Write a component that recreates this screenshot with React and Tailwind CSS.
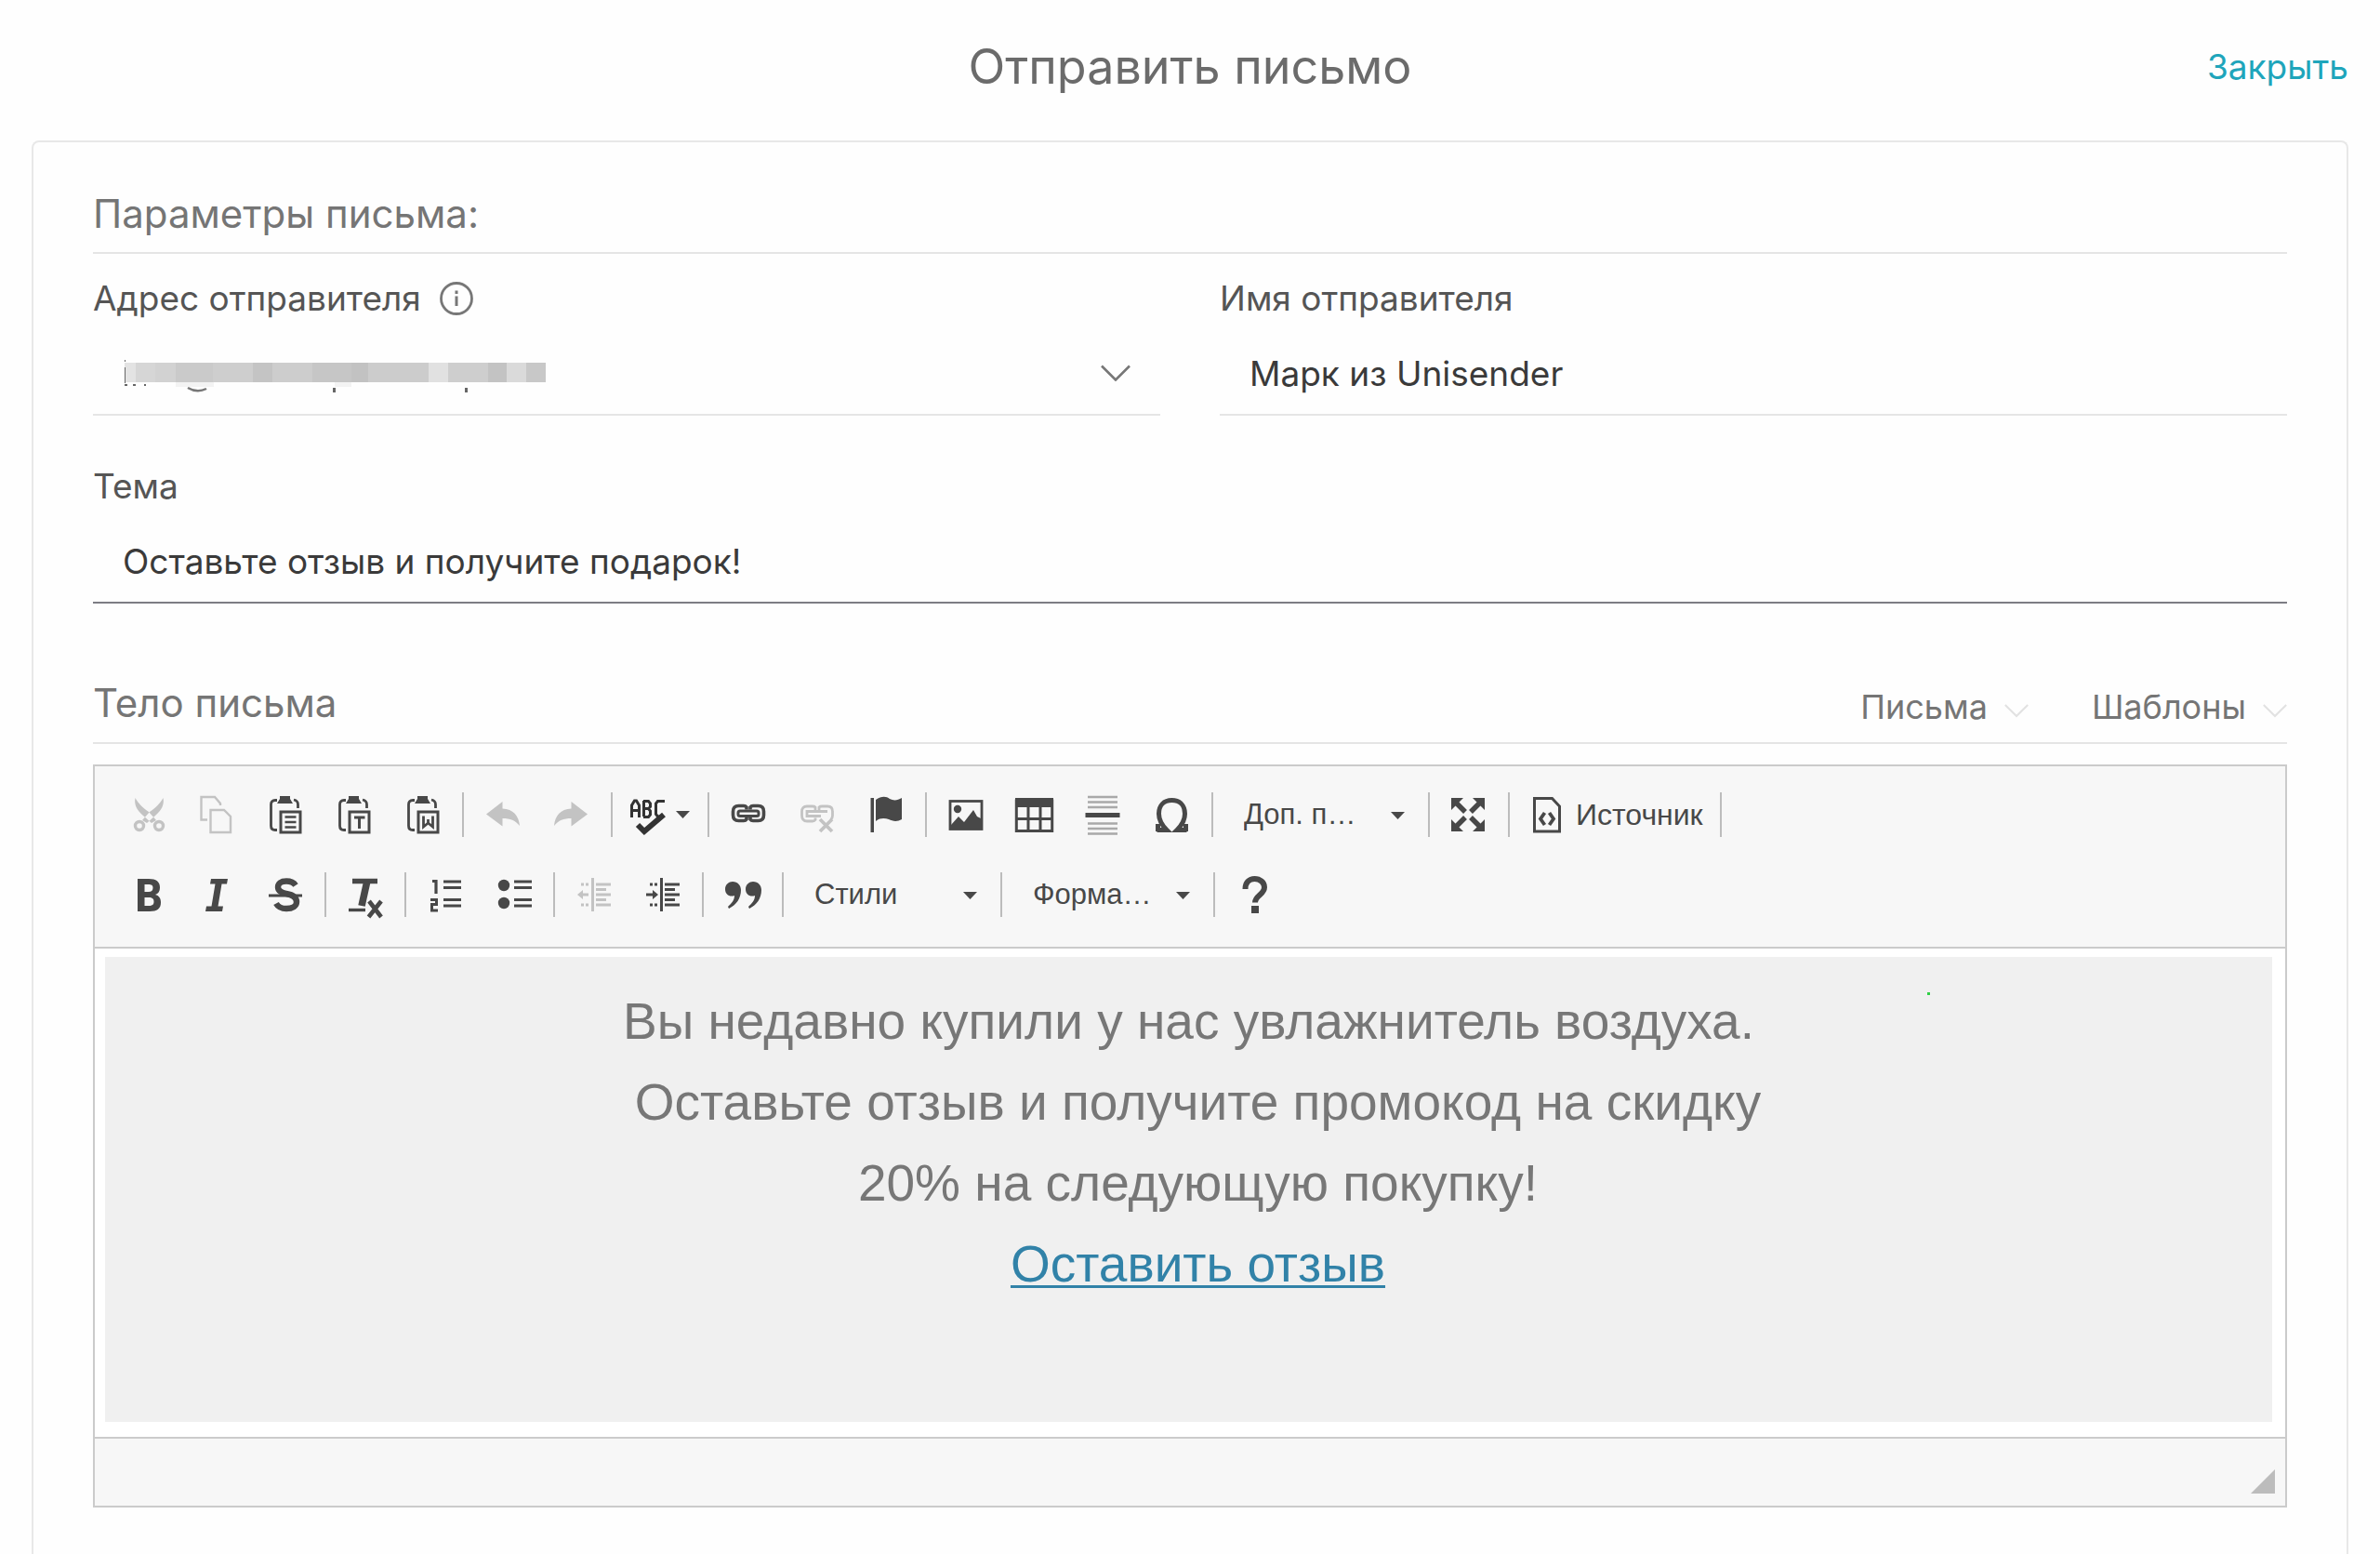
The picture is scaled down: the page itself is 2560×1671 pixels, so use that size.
import { useState } from "react";

function Chevron({ className }) {
  return (
    <svg aria-hidden className={`shrink-0 ${className}`} viewBox="0 0 32 18" fill="none">
      <path d="M1 1.5l15 15 15-15" stroke="currentColor" strokeWidth="2.6" />
    </svg>
  );
}

function Caret({ className = "" }) {
  return (
    <svg aria-hidden className={`h-2 w-[15px] shrink-0 ${className}`} viewBox="0 0 15 8">
      <path d="M0 0h15L7.5 8z" fill="#484848" />
    </svg>
  );
}

// Toolbar glyphs, each on a 36x40 grid
const ICONS = {
  cut: (
    <g>
      <path
        d="M4.500 2C3 9 6 15 13 21l9 8 5-3-8-9C12 12 8 8 4.500 2zM34.500 2c1.500 7-1.500 13-8.500 19l-9 8-5-3 8-9c7-5 11-9 14.500-15z"
        fill="currentColor"
      />
      <circle cx="9" cy="32" r="4.500" fill="none" stroke="currentColor" strokeWidth="3.400" />
      <circle cx="30" cy="32" r="4.500" fill="none" stroke="currentColor" strokeWidth="3.400" />
    </g>
  ),
  copy: (
    <g fill="none" stroke="currentColor" strokeWidth="2.4">
      <path d="M8 25.500H1.500V1H16l6 7v2" />
      <path d="M11.500 15H26l7 7v17H11.500z" />
    </g>
  ),
  undo: (
    <path
      d="M0 19.500L17.500 6v7.500C29 14 35 21 36 32c-5-6-10-8-18.500-8v8.500z"
      fill="currentColor"
    />
  ),
  redo: (
    <path
      d="M35 19.500L17.500 6v7.500C6 14 0 21-1 32c5-6 10-8 18.500-8v8.500z"
      fill="currentColor"
    />
  ),
  link: (
    <g fill="none" stroke="currentColor">
      <path
        d="M16 14.500V12q-1-1.500-3-1.500H7.500q-6 0-6 6v4q0 6 6 6H13q2 0 3-1.500v-2.500M20 14.500V12q1-1.500 3-1.500h5.500q6 0 6 6v4q0 6-6 6H23q-2 0-3-1.500v-2.500"
        strokeWidth="3.600"
      />
      <rect x="7" y="16" width="22" height="5.500" rx="2" strokeWidth="3" />
    </g>
  ),
  unlink: (
    <g fill="none" stroke="currentColor" strokeWidth="2.800">
      <path d="M16 15V12q-1-1-3-1H7q-5.500 0-5.500 5.500v4Q1.500 27 7 27h6q2 0 3-1.500v-2" />
      <path d="M20 15V12q1-1 3-1h6q5.500 0 5.500 5.500V21q0 3-2 4.500" />
      <path d="M22 21.500H7v-5h22" />
      <path d="M21 25l13 13M34 25L21 38" strokeWidth="3.800" />
    </g>
  ),
  flag: (
    <g fill="currentColor">
      <path d="M1.500 2H5v37H1.500z" />
      <path d="M7 4c6-4 11-4 15-1 4 2 8 2 13-1v23c-5 3-10 2-14 0-4-1-9-2-14 2z" />
    </g>
  ),
  image: (
    <g>
      <rect x="1" y="5.500" width="34" height="30" fill="none" stroke="currentColor" strokeWidth="2.800" />
      <circle cx="9" cy="14" r="4.200" fill="currentColor" />
      <path d="M2 36v-5l8-9 6 6 10-13 4 7 4 2v12z" fill="currentColor" />
    </g>
  ),
  table: (
    <g>
      <path d="M-3 2h41v10H-3z" fill="currentColor" />
      <path
        d="M-1.700 3.500v34h38.400v-34M11 11v27M24 11v27M-2 24.500h39"
        fill="none"
        stroke="currentColor"
        strokeWidth="3"
      />
    </g>
  ),
  rule: (
    <g stroke="currentColor">
      <path d="M1 1h32M1 6.500h32M1 12h32M1 29.500h32M1 35h32M1 40.500h32" stroke="#a9a9a9" strokeWidth="2.600" />
      <path d="M-1.500 20.500h37" strokeWidth="5" />
    </g>
  ),
  omega: (
    <path
      d="M1.500 36.500H12C7 31.500 3.500 26 3.500 19 3.500 10 9 4.500 17.500 4.500S31.500 10 31.500 19c0 7-3.500 12.500-8.500 17.500h10.500M2.500 30v8M32.500 30v8"
      fill="none"
      stroke="currentColor"
      strokeWidth="5"
    />
  ),
  maximize: (
    <g fill="currentColor" stroke="currentColor">
      <path d="M-1 2h13L-1 15zM35 2v13L22 2zM-1 38V25l13 13zM35 38H22l13-13z" stroke="none" />
      <path d="M4 7l10 10M30 7L20 17M4 33l10-10M30 33L20 23" strokeWidth="5.500" />
    </g>
  ),
  numbered: (
    <g fill="none" stroke="currentColor">
      <path d="M4 5.500h4V19" strokeWidth="3.200" />
      <path d="M2 25.500h6.500v5H3.500V37H10" strokeWidth="3" />
      <path d="M16 6h19M16 12.500h19M16 25.500h19M16 32h19" strokeWidth="3.200" />
    </g>
  ),
  bulleted: (
    <g fill="none" stroke="currentColor">
      <circle cx="7" cy="10" r="6.200" fill="currentColor" stroke="none" />
      <circle cx="7" cy="29" r="6.200" fill="currentColor" stroke="none" />
      <path d="M18 6h19M18 12.500h19M18 25.500h19M18 32h19" strokeWidth="3.200" />
    </g>
  ),
  outdent: (
    <g fill="none" stroke="currentColor">
      <path d="M16.500 2v36" strokeWidth="3" />
      <path d="M20 9h16M20 14.500h11M20 20h16M20 25.500h11M20 31h16" strokeWidth="2.800" />
      <path d="M4 9h3M9 9h3M4 31h3M9 31h3M3 20h9" strokeWidth="2.800" />
      <path d="M0 20l6-5v10z" fill="currentColor" stroke="none" />
    </g>
  ),
  indent: (
    <g fill="none" stroke="currentColor">
      <path d="M16.500 2v36" strokeWidth="3" />
      <path d="M20 9h16M20 14.500h11M20 20h16M20 25.500h11M20 31h16" strokeWidth="2.800" />
      <path d="M4 9h3M9 9h3M4 31h3M9 31h3M0 20h9" strokeWidth="2.800" />
      <path d="M13 20l-6-5v10z" fill="currentColor" stroke="none" />
    </g>
  ),
  quote: (
    <g fill="currentColor">
      <path d="M7 6c5.500 0 9 4 9 9 0 9-5 16-13 20l-1-2c4-4 7-7 7-12-5 2-10-1-10-7 0-5 4-8 8-8z" />
      <path d="M29 6c5.500 0 9 4 9 9 0 9-5 16-13 20l-1-2c4-4 7-7 7-12-5 2-10-1-10-7 0-5 4-8 8-8z" />
    </g>
  ),
  bold: (
    <path
      d="M7 3h12c8 0 12 3 12 9.500 0 4-2 6.500-5 7.500 4 1 6 4 6 8.500 0 6.500-4 9.500-12 9.500H7zM14.500 9v8h4c3.500 0 5-1.500 5-4.300S22 9 18.500 9zm0 14v9h4.500c4 0 5.500-1.500 5.500-4.500S23 23 19 23z"
      fill="currentColor"
    />
  ),
  italic: (
    <path d="M12 3h18l-1 5.500h-5.500l-4 24H25L24 38H6l1-5.500h5.500l4-24H11z" fill="currentColor" />
  ),
  strike: (
    <g fill="none" stroke="currentColor">
      <path d="M29 10c-2-3-5-4.500-10-4.500-6 0-9 2.500-9 6.500 0 5 5 6 9 7 6 1 11 3 11 9 0 4-4 7-11 7-5 0-9-2-11-5.500" strokeWidth="6.400" />
      <path d="M0 21h36" strokeWidth="3.200" />
    </g>
  ),
  removeFormat: (
    <g fill="none" stroke="currentColor">
      <path d="M4 5.500h27" strokeWidth="5.500" />
      <path d="M20 5l-6 27" strokeWidth="7.600" />
      <path d="M0 36.500h18" strokeWidth="3.400" />
      <path d="M22 27l13 17M35 27L21.500 44" strokeWidth="4.600" />
    </g>
  ),
  help: (
    <g fill="none" stroke="currentColor">
      <path d="M8.500 14c0-7 4-11 10-11S29 7 29 12c0 8-10 9-10 16.500" strokeWidth="6" />
      <path d="M15 32h8v8h-8z" fill="currentColor" stroke="none" />
    </g>
  ),
};

function Clipboard({ children }) {
  return (
    <g>
      <path
        d="M9 4.500H7Q2.500 4.500 2.500 9v23q0 4.500 4.500 4.500h2M27 4q4.500 1 4.500 5v4"
        fill="none"
        stroke="currentColor"
        strokeWidth="2.800"
      />
      <path d="M12 0h11v3l3 5H9l3-5z" fill="currentColor" />
      <rect x="13" y="17" width="21" height="22" fill="none" stroke="currentColor" strokeWidth="3" />
      {children}
    </g>
  );
}

ICONS.paste = (
  <Clipboard>
    <path d="M17.500 22.500h12M17.500 28h12M17.500 33.500h12" stroke="currentColor" strokeWidth="2.600" />
  </Clipboard>
);
ICONS.pasteText = (
  <Clipboard>
    <path d="M18 23h11.500M23.500 23v12" stroke="currentColor" strokeWidth="3" />
  </Clipboard>
);
ICONS.pasteWord = (
  <Clipboard>
    <path d="M18.500 21.500V33l5-4 5 4V21.500M23.500 25v4" fill="none" stroke="currentColor" strokeWidth="2.800" />
  </Clipboard>
);

function Tool({ icon, label, disabled }) {
  return (
    <button
      type="button"
      aria-label={label}
      disabled={disabled}
      className="flex h-12 w-[74px] items-center justify-center text-[#484848] disabled:text-[#c3c3c3]"
    >
      <svg aria-hidden className="h-10 w-9 overflow-visible" viewBox="0 0 36 40">
        {ICONS[icon]}
      </svg>
    </button>
  );
}

function Separator() {
  return <span aria-hidden className="mx-[5px] h-12 w-[2px] bg-[#bcbcbc]" />;
}

function Combo({ label, title, className }) {
  return (
    <div className={`relative h-12 ${className}`}>
      <select
        aria-label={title}
        className="h-12 w-full appearance-none bg-transparent pr-12 pl-7 text-[31px] leading-[48px] text-[#484848]"
      >
        <option>{label}</option>
      </select>
      <Caret className="pointer-events-none absolute top-[21px] right-5" />
    </div>
  );
}

function SpellCheck() {
  return (
    <button
      type="button"
      aria-label="Проверка орфографии"
      className="flex h-12 w-[92px] items-center gap-3 pl-[13px] text-[#333]"
    >
      <svg aria-hidden className="h-10 w-[38px] overflow-visible" viewBox="0 0 38 40" fill="none" stroke="currentColor">
        <path
          d="M2.500 23V10l3-5h2l3 5v13M2.500 15.500h8M15.500 5v17M15 5.500h5.500l2 2.500v3.500l-2 2h-5M20.500 13.500l2 2.500v4l-2 2.500H15M38 5.500h-7.500l-2 2.500v11.500l2 2.500H33"
          strokeWidth="3"
        />
        <path d="M9 31l7 7 21-18" strokeWidth="6" />
      </svg>
      <Caret />
    </button>
  );
}

const MOSAIC = [
  [0, 12, "#e3e3e3"],
  [12, 21, "#d6d6d6"],
  [33, 22, "#d2d2d2"],
  [55, 40, "#cacaca"],
  [95, 43, "#cecece"],
  [138, 21, "#c4c4c4"],
  [159, 43, "#cdcdcd"],
  [202, 42, "#c6c6c6"],
  [244, 18, "#c2c2c2"],
  [262, 65, "#cccccc"],
  [327, 21, "#e1e1e1"],
  [348, 43, "#cecece"],
  [391, 20, "#c3c3c3"],
  [411, 21, "#dadada"],
  [432, 21, "#c8c8c8"],
];

function MaskedAddress() {
  return (
    <svg
      aria-hidden
      className="pointer-events-none absolute top-11 left-[34px] h-9 w-[453px]"
      viewBox="0 0 453 36"
    >
      {MOSAIC.map(([x, width, fill]) => (
        <rect key={x} x={x} y="3" width={width} height="21" fill={fill} />
      ))}
      <path d="M55 24h41v5H55zM226 24h18v5h-18z" fill="#f3f3f3" />
      <path d="M0 0h1v2H0zM0 8h1v17H0zM0 26h3v2H0zM9 26h3v2H9zM21 26h2v2h-2z" fill="#666" />
      <path d="M68 30q10 6 20 1" fill="none" stroke="#777" strokeWidth="2.500" />
      <path d="M224 30h3v5h-3zM366 30h3v5h-3z" fill="#666" />
    </svg>
  );
}

const LABEL = "text-[37px] leading-[44px] text-[#555]";
const FIELD =
  "mt-[14px] h-[90px] w-full appearance-none border-b-2 border-[#e5e5e5] bg-transparent px-8 text-[37px] leading-[44px] text-[#3a3a3a] outline-none";

function MenuButton({ children }) {
  return (
    <button type="button" aria-haspopup="menu" className="flex items-center gap-[18px] text-[36px] leading-[44px]">
      {children}
      <Chevron className="mt-2 h-4 w-[26px] text-[#e2e2e2]" />
    </button>
  );
}

function Toolbar() {
  return (
    <div
      role="toolbar"
      aria-label="Форматирование"
      className="flex flex-col gap-[38px] border-b-2 border-[#cbcbcb] bg-[#f7f7f7] pt-7 pb-8 pl-5"
    >
      <div className="flex items-center">
        <Tool icon="cut" label="Вырезать" disabled />
        <Tool icon="copy" label="Копировать" disabled />
        <Tool icon="paste" label="Вставить" />
        <Tool icon="pasteText" label="Вставить только текст" />
        <Tool icon="pasteWord" label="Вставить из Word" />
        <Separator />
        <Tool icon="undo" label="Отменить" disabled />
        <Tool icon="redo" label="Повторить" disabled />
        <Separator />
        <SpellCheck />
        <Separator />
        <Tool icon="link" label="Вставить ссылку" />
        <Tool icon="unlink" label="Убрать ссылку" disabled />
        <Tool icon="flag" label="Якорь" />
        <Separator />
        <Tool icon="image" label="Изображение" />
        <Tool icon="table" label="Таблица" />
        <Tool icon="rule" label="Горизонтальная линия" />
        <Tool icon="omega" label="Специальный символ" />
        <Separator />
        <Combo label="Доп. п…" title="Дополнительные поля" className="w-[221px]" />
        <Separator />
        <Tool icon="maximize" label="Развернуть" />
        <Separator />
        <button type="button" className="flex h-12 w-[216px] items-center gap-4 pl-5 text-[32px] leading-[48px] text-[#484848]">
          <svg aria-hidden className="h-10 w-[30px] shrink-0" viewBox="0 0 30 40" fill="none" stroke="currentColor">
            <path d="M1.500 2.500h19l8 8.500v27h-27z" strokeWidth="3" />
            <path d="M12.500 18L8 24.500l4.500 6.500M17.500 18l4.500 6.500-4.500 6.500" strokeWidth="3.800" />
          </svg>
          Источник
        </button>
        <Separator />
      </div>
      <div className="flex items-center">
        <Tool icon="bold" label="Полужирный" />
        <Tool icon="italic" label="Курсив" />
        <Tool icon="strike" label="Зачёркнутый" />
        <Separator />
        <Tool icon="removeFormat" label="Убрать форматирование" />
        <Separator />
        <Tool icon="numbered" label="Нумерованный список" />
        <Tool icon="bulleted" label="Маркированный список" />
        <Separator />
        <Tool icon="outdent" label="Уменьшить отступ" disabled />
        <Tool icon="indent" label="Увеличить отступ" />
        <Separator />
        <Tool icon="quote" label="Цитата" />
        <Separator />
        <Combo label="Стили" title="Стили" className="w-[223px]" />
        <Separator />
        <Combo label="Форма…" title="Форматирование" className="w-[217px]" />
        <Separator />
        <Tool icon="help" label="Справка" />
      </div>
    </div>
  );
}

export default function App() {
  const [name, setName] = useState("Марк из Unisender");
  const [subject, setSubject] = useState("Оставьте отзыв и получите подарок!");

  return (
    <div className="min-h-screen bg-[#fefefe] font-[Inter,'Liberation_Sans',sans-serif] text-[#757575]">
      <header className="grid h-[151px] grid-cols-[1fr_auto_1fr] items-center px-[34px] pb-2">
        <h1 className="col-start-2 text-[52px] leading-[64px] text-[#6b6b6b]">Отправить письмо</h1>
        <a href="#close" className="justify-self-end text-[37px] leading-[44px] text-[#1fa5bb]">
          Закрыть
        </a>
      </header>

      <main className="mx-[34px] rounded-t-lg border-2 border-b-0 border-[#e8e8e8] px-16 pb-[50px]">
        <h2 className="border-b-2 border-[#e5e5e5] pt-[53px] pb-[17px] text-[42px] leading-[48px]">
          Параметры письма:
        </h2>

        <div className="grid grid-cols-2 gap-16 pt-[26px]">
          <div>
            <div className="flex items-center gap-5">
              <label htmlFor="sender-address" className={LABEL}>
                Адрес отправителя
              </label>
              <svg aria-hidden className="size-9" viewBox="0 0 36 36" fill="none" stroke="#777">
                <circle cx="18" cy="18" r="16.500" strokeWidth="2.800" />
                <path d="M18 15.500V26M18 9.500v3.500" strokeWidth="3" />
              </svg>
            </div>
            <div className="relative">
              <select id="sender-address" className={FIELD} />
              <MaskedAddress />
              <Chevron className="pointer-events-none absolute top-[49px] right-8 h-[18px] w-8 text-[#777]" />
            </div>
          </div>
          <div>
            <label htmlFor="sender-name" className={`block ${LABEL}`}>
              Имя отправителя
            </label>
            <input
              id="sender-name"
              className={FIELD}
              value={name}
              onChange={(event) => setName(event.target.value)}
            />
          </div>
        </div>

        <div className="pt-[54px]">
          <label htmlFor="subject" className={`block ${LABEL}`}>
            Тема
          </label>
          <input
            id="subject"
            className={`${FIELD} border-[#7d7d84]!`}
            value={subject}
            onChange={(event) => setSubject(event.target.value)}
          />
        </div>

        <div className="mt-[83px] flex items-start justify-between border-b-2 border-[#e5e5e5] pb-4">
          <h2 className="text-[42px] leading-[48px]">Тело письма</h2>
          <div className="flex gap-[68px] pt-[6px]">
            <MenuButton>Письма</MenuButton>
            <MenuButton>Шаблоны</MenuButton>
          </div>
        </div>

        <section className="mt-[22px] border-2 border-[#cbcbcb] bg-white font-['Liberation_Sans',Arial,sans-serif]">
          <Toolbar />
          <div className="pt-[9px] pr-[14px] pb-4 pl-[11px]">
            <div className="relative bg-[#f0f0f0] pt-[26px] pb-[126px] text-center text-[55px] leading-[87px] text-[#777]">
              <p>Вы недавно купили у нас увлажнитель воздуха.</p>
              <div className="pl-5">
                <p>Оставьте отзыв и получите промокод на скидку</p>
                <p>20% на следующую покупку!</p>
                <p>
                  <a href="#review" className="text-[#3182a8] underline decoration-[3px] underline-offset-4">
                    Оставить отзыв
                  </a>
                </p>
              </div>
              <span aria-hidden className="absolute top-[38px] right-[368px] size-[3px] bg-[#2fd045]" />
            </div>
          </div>
          <div className="flex h-[74px] items-end justify-end border-t-2 border-[#cbcbcb] bg-[#f7f7f7] pr-[11px] pb-[13px]">
            <svg aria-hidden className="size-[26px]" viewBox="0 0 26 26">
              <path d="M26 0v26H0z" fill="#bcbcbc" />
            </svg>
          </div>
        </section>
      </main>
    </div>
  );
}
